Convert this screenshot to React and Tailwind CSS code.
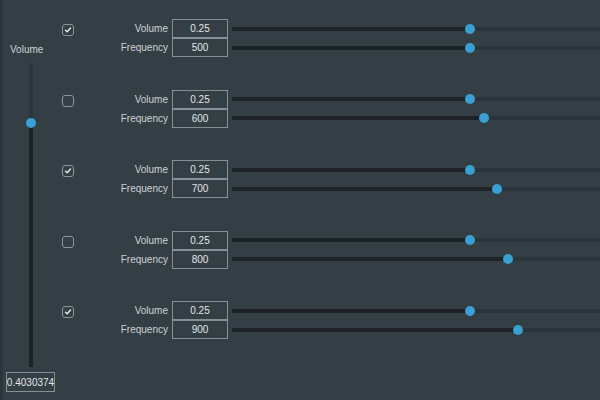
import React from 'react'

const groups = [
  { checked: true, freq: 500, fx: 238 },
  { checked: false, freq: 600, fx: 252 },
  { checked: true, freq: 700, fx: 265 },
  { checked: false, freq: 800, fx: 276 },
  { checked: true, freq: 900, fx: 286 },
]

function Checkbox({ checked }) {
  return (
    <div className="w-[12px] h-[12px] rounded-[3px] border border-[#8c959b] flex items-center justify-center">
      {checked && (
        <svg width="8" height="8" viewBox="0 0 8 8">
          <path d="M1.5 4.2 L3.2 5.8 L6.5 2" fill="none" stroke="#e8ecee" strokeWidth="1.4" strokeLinecap="round" strokeLinejoin="round" />
        </svg>
      )}
    </div>
  )
}

function Slider({ x }) {
  return (
    <div className="relative flex-1 h-[4px] ml-[4px] bg-[#2b343a]">
      <div className="absolute left-0 top-0 h-full bg-[#1c2226]" style={{ width: x }} />
      <div
        className="absolute top-[-3px] w-[10px] h-[10px] rounded-full bg-[#3a9fd2]"
        style={{ left: x - 5 }}
      />
    </div>
  )
}

function Row({ label, value, x }) {
  return (
    <div className="flex items-center h-[19px]">
      <div className="w-[88px] text-right text-[10px] text-[#cdd2d5]">{label}</div>
      <div className="ml-[4px] w-[56px] h-[19px] border border-[#868f95] flex items-center justify-center text-[10px] text-[#e3e6e8]">
        {value}
      </div>
      <Slider x={x} />
    </div>
  )
}

export default function App() {
  return (
    <div
      className="w-[600px] h-[400px] bg-[#343e45] flex overflow-hidden border-l-[3px] border-[#2c353b]"
      style={{ fontFamily: '"Liberation Sans", Arial, sans-serif' }}
    >
      <div className="w-[57px] flex flex-col items-start">
        <div className="mt-[44px] ml-[7px] text-[10px] leading-[12px] text-[#cdd2d5]">Volume</div>
        <div className="relative mt-[7px] ml-[26px] w-[4px] h-[304px] bg-[#2b343a]">
          <div className="absolute left-0 bottom-0 w-full h-[244px] bg-[#1c2226]" />
          <div className="absolute left-[-3px] top-[55px] w-[10px] h-[10px] rounded-full bg-[#3a9fd2]" />
        </div>
        <div className="mt-[5px] ml-[3px] w-[49px] h-[20px] border border-[#868f95] flex items-center justify-center text-[10px] text-[#e3e6e8]">
          0.4030374
        </div>
      </div>
      <div className="flex-1 flex flex-col pt-[19px]">
        {groups.map((g, i) => (
          <div key={i} className="flex h-[70.5px]">
            <div className="w-[20px] pt-[5px] pl-[2px]">
              <Checkbox checked={g.checked} />
            </div>
            <div className="flex-1 flex flex-col">
              <Row label="Volume" value="0.25" x={238} />
              <Row label="Frequency" value={g.freq} x={g.fx} />
            </div>
          </div>
        ))}
      </div>
    </div>
  )
}
